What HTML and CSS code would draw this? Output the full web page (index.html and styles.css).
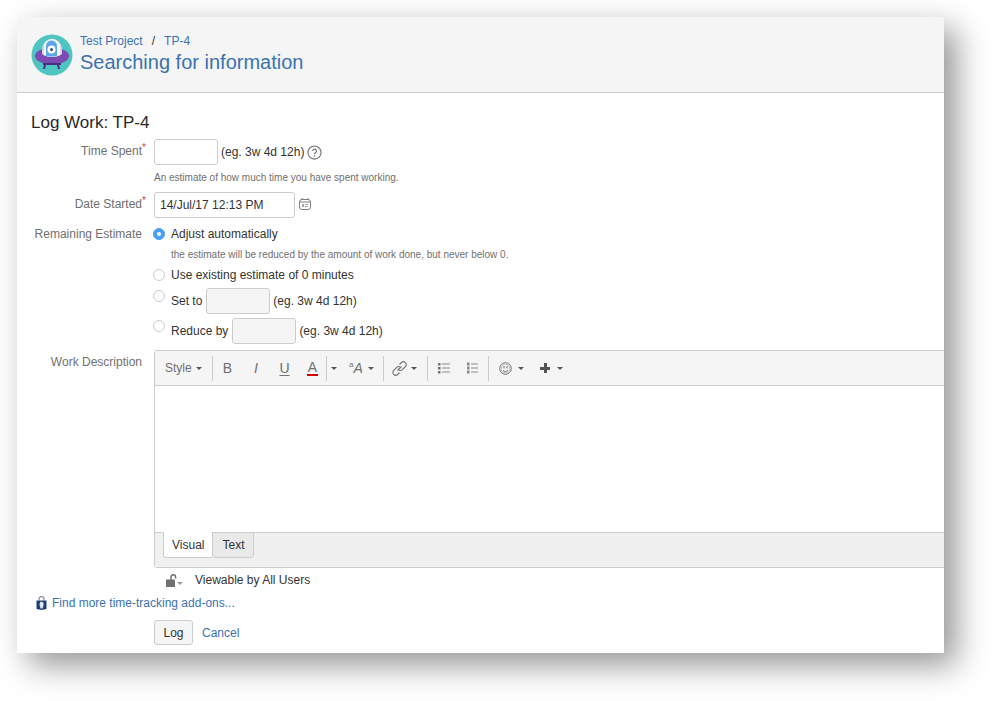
FILE: index.html
```html
<!DOCTYPE html>
<html lang="en">
<head>
  <meta charset="UTF-8">
  <title>Log Work: TP-4</title>
  <link rel="stylesheet" href="styles.css">
</head>
<body>
  <div class="window">
    <header class="issue-header">
      <svg class="avatar" width="42" height="42" viewBox="0 0 42 42">
        <circle cx="21" cy="21" r="20.500" fill="#4fc5c1"/>
        <ellipse cx="21" cy="22" rx="17" ry="8.500" fill="#7b4bb3"/>
        <path d="M11 15a10 10 0 0 1 20 0v5c-4 4-16 4-20 0z" fill="#d9d5ee"/>
        <path d="M13 13a8 8 0 0 1 16 0v8c-4 2-12 2-16 0z" fill="#f2f7fb"/>
        <path d="M15 12a5.500 5.500 0 0 1 11 0v10c-3 .5-8 .5-11 0z" fill="#5aa9e6"/>
        <circle cx="20.500" cy="15.500" r="4" fill="#fff"/>
        <circle cx="20.500" cy="15.500" r="1.500" fill="#26507f"/>
        <path d="M12 29h18v2h-2l1 4h-2l-1-4H15l-1 4h-2l1-4h-1z" fill="#4b2c85"/>
      </svg>
      <div class="issue-title">
        <div class="crumbs"><a href="#">Test Project</a><span class="sep">/</span><a href="#">TP-4</a></div>
        <h1>Searching for information</h1>
      </div>
    </header>

    <form class="log-form">
      <h2>Log Work: TP-4</h2>

      <div class="row row-spent">
        <label class="req">Time Spent</label>
        <div class="field">
          <div class="inline">
            <input type="text" class="input input-short">
            <span>(eg. 3w 4d 12h)</span>
            <svg class="help" width="15" height="15" viewBox="0 0 16 16">
              <circle cx="8" cy="8" r="7" fill="none" stroke="#707070" stroke-width="1.200"/>
              <path d="M6 6.400a2 2 0 1 1 3.200 1.600c-.8.600-1.200.900-1.200 1.800" fill="none" stroke="#707070" stroke-width="1.200"/>
              <circle cx="8" cy="11.800" r=".8" fill="#707070"/>
            </svg>
          </div>
          <div class="hint hint-spent">An estimate of how much time you have spent working.</div>
        </div>
      </div>

      <div class="row row-date">
        <label class="req">Date Started</label>
        <div class="field inline">
          <input type="text" class="input input-date" value="14/Jul/17 12:13 PM">
          <svg class="calendar" width="12" height="12" viewBox="0 0 12 12">
            <rect x=".5" y="1.500" width="11" height="10" rx="2.500" fill="none" stroke="#808080"/>
            <path d="M.5 4h11M3 0v2M9 0v2" stroke="#808080"/>
            <path d="M3 6h2v3H3zM6 6h3v1H6zM6 8h3v1H6z" fill="#a8a8a8"/>
          </svg>
        </div>
      </div>

      <div class="row row-remaining">
        <label>Remaining Estimate</label>
        <div class="field field-radios">
          <div class="radio-line radio-adjust"><span class="radio radio-on"></span>Adjust automatically</div>
          <div class="hint hint-adjust">the estimate will be reduced by the amount of work done, but never below 0.</div>
          <div class="radio-line radio-existing"><span class="radio"></span>Use existing estimate of 0 minutes</div>
          <div class="radio-line radio-set"><span class="radio radio-high"></span>Set to<input type="text" class="input input-off"><span>(eg. 3w 4d 12h)</span></div>
          <div class="radio-line radio-reduce"><span class="radio radio-high"></span>Reduce by<input type="text" class="input input-off"><span>(eg. 3w 4d 12h)</span></div>
        </div>
      </div>

      <div class="row row-desc">
        <label>Work Description</label>
        <div class="editor">
          <div class="toolbar">
            <span class="tool tool-style">Style<i class="caret"></i></span>
            <span class="divider"></span>
            <span class="tool tool-b">B</span>
            <span class="tool tool-i">I</span>
            <span class="tool tool-u">U</span>
            <span class="tool tool-a"><span>A</span></span>
            <span class="divider"></span>
            <span class="tool tool-acaret"><i class="caret"></i></span>
            <span class="tool tool-size"><sup>a</sup><em>A</em><i class="caret"></i></span>
            <span class="divider"></span>
            <span class="tool tool-link">
              <svg width="15" height="15" viewBox="0 0 15 15" fill="none" stroke="#707070" stroke-width="1.100">
                <path d="M5.500 9.500l4-4"/>
                <path d="M7.500 3.500l1.800-1.800a2.800 2.800 0 0 1 4 4l-3 3a2.800 2.800 0 0 1-3.300.4"/>
                <path d="M7.500 11.500l-1.800 1.800a2.800 2.800 0 0 1-4-4l3-3a2.800 2.800 0 0 1 3.300-.4"/>
              </svg>
              <i class="caret"></i>
            </span>
            <span class="divider"></span>
            <span class="tool tool-bullets">
              <svg width="12" height="12" viewBox="0 0 12 12">
                <path d="M0 1h2.500v2.500H0zM0 5h2.500v2.500H0zM0 9h2.500v2.500H0z" fill="#707070"/>
                <path d="M4 2h8M4 6h8M4 10h8" stroke="#8a8a8a"/>
              </svg>
            </span>
            <span class="tool tool-numbers">
              <svg width="11" height="12" viewBox="0 0 11 12">
                <path d="M0 .5h2.500v3H0zM0 4.500h2.500v3H0zM0 8.500h2.500v3H0z" fill="#8a8a8a"/>
                <path d="M4 2h7M4 6h7M4 10h7" stroke="#8a8a8a"/>
              </svg>
            </span>
            <span class="divider"></span>
            <span class="tool tool-smile">
              <svg width="13" height="13" viewBox="0 0 13 13" fill="none" stroke="#707070">
                <circle cx="6.500" cy="6.500" r="5.800"/>
                <circle cx="6.500" cy="6.500" r="4.300" stroke="#b5b5b5"/>
                <path d="M5 4v2.500M8 4v2.500M4 8.500c1.500 1.300 3.500 1.300 5 0"/>
              </svg>
              <i class="caret"></i>
            </span>
            <span class="tool tool-plus"><b></b><i class="caret"></i></span>
          </div>
          <div class="editor-body"></div>
          <div class="editor-tabs">
            <span class="tab tab-on">Visual</span>
            <span class="tab">Text</span>
          </div>
        </div>
      </div>

      <div class="row row-security">
        <div class="field inline">
          <svg class="lock" width="18" height="13" viewBox="0 0 18 13">
            <rect x="1" y="5.500" width="9" height="7.500" rx=".5" fill="#707070"/>
            <path d="M6 6V3a2.300 2.300 0 0 1 4.600 0v1.500" fill="none" stroke="#707070" stroke-width="1.500"/>
            <path d="M12 8h6l-3 3z" fill="#999"/>
          </svg>
          <span>Viewable by All Users</span>
        </div>
      </div>

      <div class="addons">
        <svg width="11" height="14" viewBox="0 0 11 14">
          <path d="M3 4.500V3a2.500 2.500 0 0 1 5 0v1.500" fill="none" stroke="#8a97a8" stroke-width="1.300"/>
          <path d="M.5 4.500h10v8.500l-5 1-5-1z" fill="#1f3f6e"/>
          <path d="M4.500 5.500l3 1v3l-1 3H4.500l-1-4z" fill="#dfe5ee"/>
        </svg>
        <a href="#">Find more time-tracking add-ons...</a>
      </div>

      <div class="row row-actions">
        <div class="field inline">
          <button type="button" class="btn">Log</button>
          <a href="#">Cancel</a>
        </div>
      </div>
    </form>
  </div>
</body>
</html>
```

FILE: styles.css
```css
html, body {
  margin: 0;
  height: 100%;
  background: #fff;
  overflow: hidden;
}
body {
  font-family: "Liberation Sans", Arial, sans-serif;
  font-size: 12px;
  color: #333;
}
a {
  color: #3b73af;
  text-decoration: none;
}
.window {
  margin: 17px 0 0 17px;
  width: 927px;
  height: 636px;
  background: #fff;
  box-shadow: 12px 12px 30px rgba(0, 0, 0, 0.42);
  overflow: hidden;
}
.issue-header {
  display: flex;
  align-items: center;
  gap: 8px;
  height: 75px;
  padding-left: 14px;
  background: #f5f5f5;
  border-bottom: 1px solid #ccc;
}
.avatar {
  flex: none;
  margin-right: -1px;
}
.issue-title {
  margin-top: -2px;
}
.crumbs {
  font-size: 12px;
  line-height: 16px;
}
.sep {
  margin: 0 9px;
  color: #333;
}
h1 {
  margin: 0;
  font-size: 20px;
  font-weight: 400;
  line-height: 26px;
  color: #3b73af;
}
.log-form {
  padding-left: 14px;
}
h2 {
  margin: 0;
  padding-top: 20px;
  font-size: 17px;
  font-weight: 400;
  line-height: 20px;
  color: #292929;
}
.row {
  display: flex;
}
.row > label {
  flex: none;
  width: 111px;
  margin-right: 12px;
  text-align: right;
  white-space: nowrap;
  color: #707070;
}
.req::after {
  content: "*";
  position: absolute;
  margin-top: -2px;
  font-size: 10px;
  color: #d04437;
}
.inline {
  display: flex;
  align-items: center;
}
.input {
  box-sizing: border-box;
  height: 26px;
  margin: 0;
  padding: 0 5px;
  font: inherit;
  color: #333;
  background: #fff;
  border: 1px solid #ccc;
  border-radius: 3px;
}
.input-short {
  width: 64px;
  margin-right: 3px;
}
.input-date {
  width: 141px;
}
.input-off {
  width: 64px;
  margin: 0 3px 0 4px;
  background: #f5f5f5;
}
.help {
  margin-left: 3px;
}
.calendar {
  margin: -3px 0 0 4px;
}
.hint {
  font-size: 10px;
  color: #707070;
}
.row-spent {
  margin-top: 6px;
}
.row-spent > label {
  padding-top: 5px;
}
.hint-spent {
  margin-top: 7px;
  line-height: 12px;
}
.row-date {
  margin-top: 8px;
}
.row-date > label {
  padding-top: 5px;
}
.row-remaining {
  margin-top: 8px;
}
.row-remaining > label {
  padding-top: 1px;
}
.field-radios {
  margin-left: -1px;
}
.radio-line {
  display: flex;
  align-items: center;
  color: #333;
}
.radio {
  box-sizing: border-box;
  flex: none;
  width: 12px;
  height: 12px;
  margin-right: 6px;
  background: #fff;
  border: 1px solid #ccc;
  border-radius: 50%;
}
.radio-on {
  position: relative;
  background: #4a9ff5;
  border-color: #4a9ff5;
}
.radio-on::after {
  content: "";
  position: absolute;
  top: 3px;
  left: 3px;
  width: 4px;
  height: 4px;
  background: #fff;
  border-radius: 50%;
}
.radio-high {
  margin-top: -10px;
}
.radio-adjust {
  height: 16px;
}
.hint-adjust {
  margin-left: 18px;
  margin-top: 7px;
  line-height: 12px;
}
.radio-existing {
  margin-top: 6px;
  height: 16px;
}
.radio-set {
  margin-top: 5px;
  height: 26px;
}
.radio-reduce {
  margin-top: 4px;
  height: 26px;
}
.row-desc {
  margin-top: 6px;
}
.row-desc > label {
  padding-top: 5px;
}
.editor {
  box-sizing: border-box;
  flex: none;
  width: 830px;
  height: 218px;
  display: flex;
  flex-direction: column;
  border: 1px solid #ccc;
  border-radius: 3px;
}
.toolbar {
  box-sizing: border-box;
  flex: none;
  display: flex;
  align-items: center;
  height: 35px;
  background: #f5f5f5;
  border-bottom: 1px solid #ccc;
  color: #707070;
}
.divider {
  flex: none;
  width: 1px;
  height: 25px;
  background: #ccc;
}
.tool {
  flex: none;
  display: flex;
  align-items: center;
  justify-content: center;
  color: #707070;
}
.caret {
  display: inline-block;
  width: 0;
  height: 0;
  margin-left: 4px;
  border: 3px solid transparent;
  border-top: 3px solid #555;
  border-bottom: 0;
}
.tool-style {
  justify-content: flex-start;
  width: 47px;
  padding-left: 10px;
}
.tool-b,
.tool-u {
  width: 29px;
  font-size: 14px;
}
.tool-i {
  width: 28px;
  font-size: 14px;
  font-style: italic;
}
.tool-u {
  text-decoration: underline;
  text-underline-offset: 2px;
}
.tool-a {
  width: 27px;
  font-size: 14px;
}
.tool-a span {
  width: 11px;
  line-height: 14px;
  text-align: center;
  border-bottom: 2px solid #d00;
}
.tool-acaret {
  width: 14px;
}
.tool-acaret .caret {
  margin-left: 0;
}
.tool-size {
  justify-content: flex-start;
  width: 42px;
  padding-left: 8px;
  box-sizing: border-box;
}
.tool-size sup {
  margin-top: -7px;
  font-size: 8px;
}
.tool-size em {
  font-size: 14px;
}
.tool-size .caret {
  margin-left: 5px;
}
.tool-link {
  justify-content: flex-start;
  box-sizing: border-box;
  width: 43px;
  padding-left: 8px;
}
.tool-link .caret {
  margin-left: 4px;
}
.tool-bullets {
  justify-content: flex-start;
  box-sizing: border-box;
  width: 31px;
  padding-left: 10px;
}
.tool-numbers {
  justify-content: flex-start;
  box-sizing: border-box;
  width: 29px;
  padding-left: 8px;
}
.tool-smile {
  margin-left: 10px;
}
.tool-smile .caret {
  margin-left: 6px;
}
.tool-plus {
  margin-left: 16px;
}
.tool-plus .caret {
  margin-left: 7px;
}
.tool-plus b {
  display: block;
  width: 10px;
  height: 10px;
  background:
    linear-gradient(#555, #555) center / 10px 3px no-repeat,
    linear-gradient(#555, #555) center / 3px 10px no-repeat;
}
.editor-body {
  flex: 1;
  background: #fff;
}
.editor-tabs {
  box-sizing: border-box;
  flex: none;
  display: flex;
  height: 35px;
  padding-left: 8px;
  background: #f0f0f0;
  border-top: 1px solid #ccc;
}
.tab {
  box-sizing: border-box;
  height: 26px;
  margin-top: -1px;
  padding: 0 9px;
  line-height: 24px;
  background: #e9e9e9;
  border: 1px solid #ccc;
  border-radius: 0 0 3px 3px;
}
.tab-on {
  padding: 0 8px 0 8px;
  background: #fff;
  border-top-color: #fff;
  border-right: 0;
  border-radius: 0 0 0 3px;
}
.row-security {
  margin-top: 4px;
  margin-left: 134px;
  line-height: 16px;
}
.lock {
  margin-right: 12px;
}
.addons {
  display: flex;
  align-items: center;
  gap: 5px;
  margin-top: 7px;
  margin-left: 5px;
  line-height: 16px;
}
.row-actions {
  margin-top: 9px;
  margin-left: 123px;
}
.btn {
  box-sizing: border-box;
  width: 39px;
  height: 25px;
  margin-right: 9px;
  padding: 0;
  font: inherit;
  color: #333;
  background: #f5f5f5;
  border: 1px solid #ccc;
  border-radius: 3px;
}
```
